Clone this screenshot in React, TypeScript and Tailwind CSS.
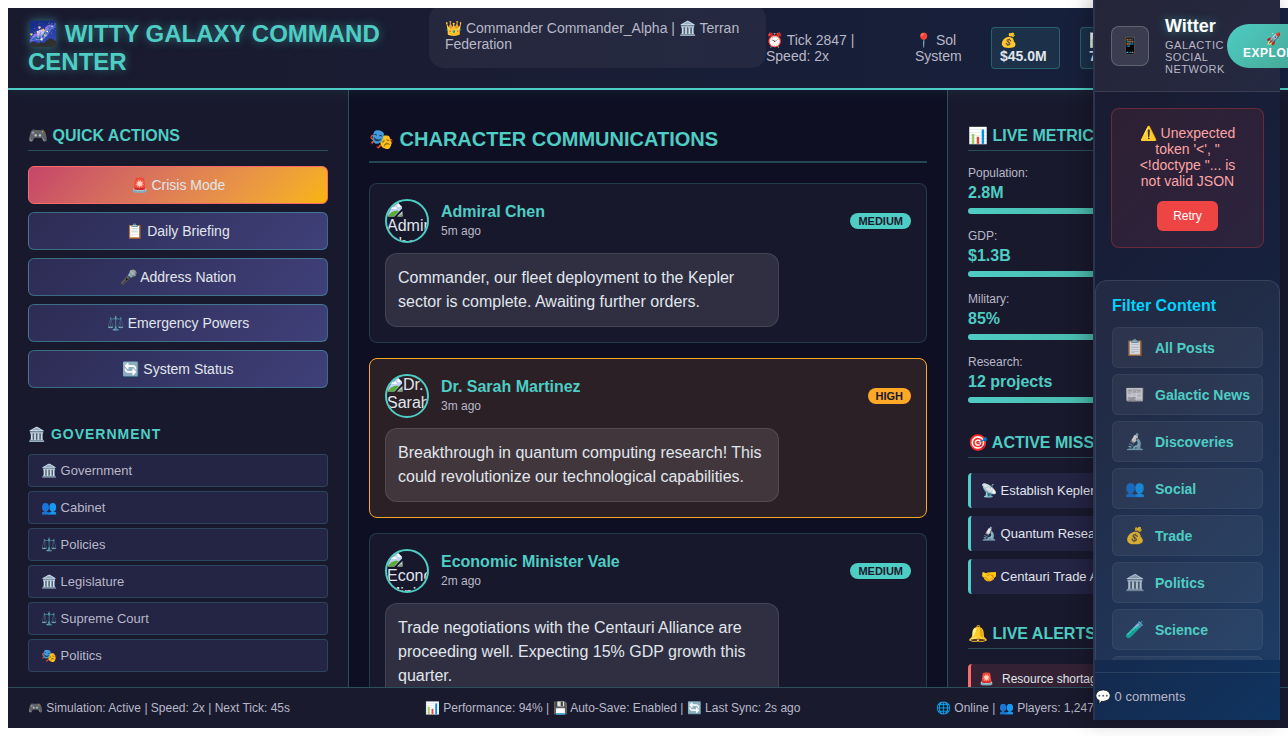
import React from 'react';

const actions = ['📋 Daily Briefing', '🎤 Address Nation', '⚖️ Emergency Powers', '🔄 System Status'];

const government = ['🏛️ Government', '👥 Cabinet', '⚖️ Policies', '🏛️ Legislature', '⚖️ Supreme Court', '🎭 Politics'];

const messages = [
  {
    name: 'Admiral Chen',
    time: '5m ago',
    level: 'MEDIUM',
    text: 'Commander, our fleet deployment to the Kepler sector is complete. Awaiting further orders.',
  },
  {
    name: 'Dr. Sarah Martinez',
    time: '3m ago',
    level: 'HIGH',
    text: 'Breakthrough in quantum computing research! This could revolutionize our technological capabilities.',
  },
  {
    name: 'Economic Minister Vale',
    time: '2m ago',
    level: 'MEDIUM',
    text: 'Trade negotiations with the Centauri Alliance are proceeding well. Expecting 15% GDP growth this quarter.',
  },
];

const metrics = [
  ['Population:', '2.8M'],
  ['GDP:', '$1.3B'],
  ['Military:', '85%'],
  ['Research:', '12 projects'],
];

const missions = ['📡 Establish Kepler Colony', '🔬 Quantum Research', '🤝 Centauri Trade Agreement'];

const filters = [
  ['📋', 'All Posts'],
  ['📰', 'Galactic News'],
  ['🔬', 'Discoveries'],
  ['👥', 'Social'],
  ['💰', 'Trade'],
  ['🏛️', 'Politics'],
  ['🧪', 'Science'],
  ['🎭', 'Culture'],
];

function BrokenImage() {
  return (
    <svg width="16" height="16" viewBox="0 0 16 16" className="float-left">
      <path d="M1 1.5h9.5l4.5 4.5v1.5L7.5 15.5H1z" fill="#bfd3f4" />
      <path d="M3 8c-.5-2 2-3 3.2-1.6C8 5 10.500 6.500 9.500 8z" fill="#fff" />
      <path d="M1 15.500c1.500-4 6-6.500 11-5.500l-5 5.500z" fill="#58ad38" />
      <path d="M10.500 1.500V6H15z" fill="#fff" />
      <path d="M15.500 10v5.500H10z" fill="#c4d3dc" />
      <path d="M15.500 13v2.500H11l2-2z" fill="#82a378" />
      <path d="M10.500 1.500H1v14" fill="none" stroke="#a8afb8" strokeWidth=".7" />
    </svg>
  );
}

function SectionTitle({ children }: { children: React.ReactNode }) {
  return (
    <h3 className="h-[41px] shrink-0 overflow-hidden whitespace-nowrap border-b border-[#4ecdc4]/30 pt-[17px] text-base leading-[18px] font-bold text-[#4ecdc4]">
      {children}
    </h3>
  );
}

function Header() {
  return (
    <header className="relative z-10 flex h-[82px] shrink-0 items-center border-b-2 border-[#4ecdc4] bg-linear-to-r from-[#1a1a2e] to-[#16213e] pl-5 text-sm leading-4 text-[#b8b8c8] shadow-[0_2px_14px_rgba(78,205,196,0.09)]">
      <h1 className="w-[401px] shrink-0 text-2xl leading-7 font-bold text-[#4ecdc4] [text-shadow:0_0_10px_rgba(78,205,196,0.5)]">
        🌌 WITTY GALAXY COMMAND
        <br />
        CENTER
      </h1>
      <div className="h-[60px] w-[337px] shrink-0 self-start overflow-hidden">
        <div className="-mt-1 h-16 rounded-[15px] bg-white/5 p-4">
          👑 Commander Commander_Alpha | 🏛️ Terran
          <br />
          Federation
        </div>
      </div>
      <div className="w-[149px] shrink-0">
        ⏰ Tick 2847 |
        <br />
        Speed: 2x
      </div>
      <div className="w-[76px] shrink-0">
        📍 Sol
        <br />
        System
      </div>
      <div className="flex shrink-0 gap-5 font-bold text-[#e0e6ed]">
        <div className="h-[42px] w-[69px] rounded border border-[#4ecdc4]/30 bg-[#4ecdc4]/10 px-2 py-1">
          💰
          <br />
          $45.0M
        </div>
        <div className="h-[42px] w-[69px] rounded border border-[#4ecdc4]/30 bg-[#4ecdc4]/10 px-2 py-1">
          📊
          <br />
          78%
        </div>
      </div>
    </header>
  );
}

function LeftPanel() {
  return (
    <aside className="flex flex-col overflow-hidden border-r border-[#4ecdc4]/30 bg-[#1a1a2e]/95 px-5 pt-5">
      <SectionTitle>🎮 QUICK ACTIONS</SectionTitle>
      <div className="mt-[15px] flex flex-col gap-2 text-sm text-[#e0e6ed]">
        <button className="h-[38px] rounded-md border border-[#ff6b6b] bg-linear-135 from-[#c44569] to-[#f8b500]">🚨 Crisis Mode</button>
        {actions.map((a) => (
          <button key={a} className="h-[38px] rounded-md border border-[#4ecdc4]/40 bg-linear-135 from-[#2c2c54] to-[#40407a]">
            {a}
          </button>
        ))}
      </div>
      <h4 className="mt-[38px] h-4 text-sm leading-4 font-bold tracking-[1px] text-[#4ecdc4]">🏛️ GOVERNMENT</h4>
      <nav className="mt-3 flex flex-col gap-1">
        {government.map((g) => (
          <a key={g} className="flex h-[33px] items-center rounded border border-[#4ecdc4]/20 bg-[#2c2c54]/60 px-3 text-[13px] text-[#b8b8c8]">
            {g}
          </a>
        ))}
      </nav>
    </aside>
  );
}

function Communications() {
  return (
    <main className="flex flex-col overflow-hidden px-5 pt-5">
      <h2 className="h-[53px] shrink-0 border-b-2 border-[#4ecdc4]/30 pt-[17px] text-xl leading-6 font-bold text-[#4ecdc4]">🎭 CHARACTER COMMUNICATIONS</h2>
      <div className="mt-5 flex flex-col gap-[15px]">
        {messages.map((m) => {
          const high = m.level === 'HIGH';
          return (
            <article
              key={m.name}
              className={`rounded-lg border p-[15px] ${high ? 'border-[#ffa726] bg-[#2b2026]' : 'border-[#4ecdc4]/20 bg-[#1a1a2e]/80'}`}
            >
              <div className="flex h-11 items-center">
                <div className="h-11 w-11 shrink-0 overflow-hidden rounded-full border-2 border-[#4ecdc4] text-base leading-[18px] text-[#e0e6ed]">
                  <BrokenImage />
                  {m.name}
                </div>
                <div className="ml-3 flex-1">
                  <div className="text-base leading-[18px] font-bold text-[#4ecdc4]">{m.name}</div>
                  <div className="mt-[3px] mb-px text-xs leading-[14px] text-[#b8b8c8]">{m.time}</div>
                </div>
                <span className={`h-4 rounded-[10px] px-2 text-[11px] leading-4 font-bold text-[#1a1a2e] ${high ? 'bg-[#ffa726]' : 'bg-[#4ecdc4]'}`}>{m.level}</span>
              </div>
              <p className="mt-2.5 w-[394px] rounded-xl border border-white/10 bg-white/10 p-3 text-base leading-6 text-[#e0e6ed]">{m.text}</p>
            </article>
          );
        })}
      </div>
    </main>
  );
}

function RightPanel() {
  return (
    <aside className="flex flex-col overflow-hidden border-l border-[#4ecdc4]/30 bg-[#1a1a2e]/95 px-5 pt-5">
      <SectionTitle>📊 LIVE METRICS</SectionTitle>
      <div className="mt-[15px] flex flex-col gap-[15px]">
        {metrics.map(([label, value]) => (
          <div key={label} className="h-12">
            <div className="text-xs leading-[14px] text-[#b8b8c8]">{label}</div>
            <div className="mt-1 text-base leading-[18px] font-bold text-[#4ecdc4]">{value}</div>
            <div className="mt-1.5 h-1.5 rounded-[3px] bg-linear-to-r from-[#4ecdc4] to-[#44a08d]" />
          </div>
        ))}
      </div>
      <div className="mt-3.5 flex flex-col">
        <SectionTitle>🎯 ACTIVE MISSIONS</SectionTitle>
        <div className="mt-[15px] flex flex-col gap-2">
          {missions.map((m) => (
            <div key={m} className="flex h-[35px] items-center rounded border-l-3 border-[#4ecdc4] bg-[#2c2c54]/60 px-2.5 text-[13px] text-[#e0e6ed]">
              {m}
            </div>
          ))}
        </div>
      </div>
      <div className="mt-3.5 flex flex-col">
        <SectionTitle>🔔 LIVE ALERTS</SectionTitle>
        <div className="mt-[15px] flex h-[30px] shrink-0 items-center gap-2 rounded border-l-3 border-[#ff6b6b] bg-[#ff6b6b]/12 px-2 text-xs text-[#e0e6ed]">
          <span>🚨</span>
          <span>Resource shortage in Sector 7</span>
        </div>
      </div>
    </aside>
  );
}

function WitterPanel() {
  return (
    <section className="absolute top-0 left-[1093px] z-20 flex h-[720px] w-[187px] flex-col border-l-2 border-[#2c3350] bg-linear-135 from-[#1a1a2e] via-[#16213e] to-[#0f3460] shadow-[-4px_0_20px_rgba(0,0,0,0.3)]">
      <header className="flex h-[92px] shrink-0 items-center border-b border-white/10 bg-white/5 pl-4">
        <div className="flex h-10 w-[38px] shrink-0 items-center justify-center rounded-lg border border-white/20 bg-white/10 text-base">📱</div>
        <div className="mb-0.5 ml-4 w-[62px] shrink-0">
          <h2 className="text-lg leading-[22px] font-bold text-white [text-shadow:0_0_10px_rgba(78,205,196,0.5)]">Witter</h2>
          <p className="mt-0.5 text-[11px] leading-3 tracking-[0.5px] text-[#b8b8c8]">
            GALACTIC
            <br />
            SOCIAL
            <br />
            NETWORK
          </p>
        </div>
        <button className="h-11 w-[92px] shrink-0 rounded-[22px] bg-linear-135 from-[#4ecdc4] to-[#44a08d] pl-px text-xs leading-[14px] font-bold tracking-[0.5px] text-white">
          🚀
          <br />
          EXPLORE
        </button>
      </header>
      <div className="flex h-[568px] shrink-0 flex-col overflow-hidden">
        <div className="mx-4 mt-4 h-[140px] shrink-0 rounded-lg border border-[#ef4444]/30 bg-[#ef4444]/10 p-4 text-center text-sm leading-4 text-[#fca5a5]">
          <p>
            ⚠️ Unexpected
            <br />
            token '&lt;', "
            <br />
            &lt;!doctype "... is
            <br />
            not valid JSON
          </p>
          <button className="mt-3 h-[30px] w-[61px] rounded-md bg-[#ef4444] text-xs text-white">Retry</button>
        </div>
        <div className="mt-8 shrink-0 rounded-xl border border-white/10 bg-white/5 p-4">
          <h3 className="text-base leading-[18px] font-bold text-[#00d4ff]">Filter Content</h3>
          <div className="mt-3 flex flex-col gap-1.5">
            {filters.map(([icon, label]) => (
              <button key={label} className="flex h-[41px] items-center rounded-md border border-white/5 bg-white/5 px-3 text-sm font-bold whitespace-nowrap text-[#4ecdc4]">
                <span className="w-[30px] shrink-0 text-left text-base opacity-80">{icon}</span>
                {label}
              </button>
            ))}
          </div>
        </div>
      </div>
      <footer className="mt-3 flex h-12 items-center border-t border-white/10 text-[13px] text-[#b8b8c8]">💬 0 comments</footer>
    </section>
  );
}

export default function App() {
  return (
    <div className="relative h-[736px] w-[1288px] overflow-hidden bg-white py-2 pl-2 font-['Liberation_Sans',Arial,sans-serif]">
      <div className="flex h-[720px] w-[1280px] flex-col overflow-hidden bg-[#0f0f23]">
        <Header />
        <div className="grid h-[597px] shrink-0 grid-cols-[341px_598px_341px] overflow-hidden">
          <LeftPanel />
          <Communications />
          <RightPanel />
        </div>
        <footer className="flex h-[41px] shrink-0 items-center border-t border-[#4ecdc4]/30 bg-[#1a1a2e] px-5 text-xs whitespace-nowrap text-[#b8b8c8]">
          <span className="w-[397px]">🎮 Simulation: Active | Speed: 2x | Next Tick: 45s</span>
          <span className="w-[511px]">📊 Performance: 94% | 💾 Auto-Save: Enabled | 🔄 Last Sync: 2s ago</span>
          <span>🌐 Online | 👥 Players: 1,247</span>
        </footer>
      </div>
      <WitterPanel />
    </div>
  );
}
